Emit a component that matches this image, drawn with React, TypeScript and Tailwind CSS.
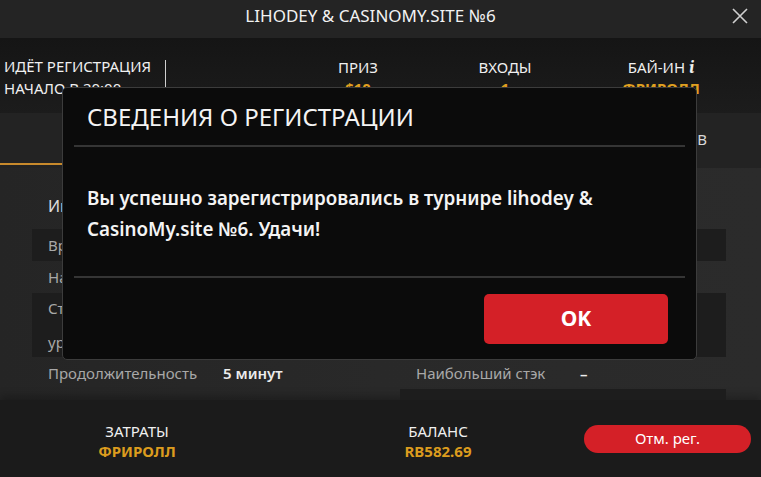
import React from 'react'

const font = { fontFamily: '"Noto Sans", "Open Sans", sans-serif' }

const leftRows = [
  { label: 'Время начала', value: '20:00', dark: true, tall: false },
  { label: 'Начальный стэк', value: '10 000', dark: false, tall: false },
  { label: 'Стартовый', value: '10/20', dark: true, tall: true, extra: 'уровень блайндов' },
  { label: 'Продолжительность', value: '5 минут', dark: false, tall: false },
]

const rightRows = [
  { label: 'Игроков', value: '1', dark: true, tall: false },
  { label: 'Столов', value: '1', dark: false, tall: false },
  { label: 'Средний стэк', value: '–', dark: true, tall: true },
  { label: 'Наибольший стэк', value: '–', dark: false, tall: false },
  { label: '', value: '', dark: true, tall: false },
]

function Row({ row, valueX }: { row: any; valueX: string }) {
  return (
    <div
      className={`flex shrink-0 flex-col justify-center px-4 ${row.tall ? 'h-[64px]' : 'h-[32px]'} ${
        row.dark ? 'bg-[#1d1d1d]' : ''
      }`}
    >
      <div className="flex items-center text-[15px]">
        <span className={`text-[#a8a8a8] ${valueX}`}>{row.label}</span>
        <span className="font-semibold text-[#ececec]">{row.value}</span>
      </div>
      {row.extra && <div className="mt-[12px] text-[15px] text-[#a8a8a8]">{row.extra}</div>}
    </div>
  )
}

export default function App() {
  return (
    <div className="relative h-[477px] w-[761px] overflow-hidden bg-[#262626] text-white" style={font}>
      {/* title bar */}
      <div className="relative flex h-[38px] items-center justify-center bg-[#242424] pb-[7px] pr-[20px]">
        <span className="text-[17px] text-[#f2f2f2]">LIHODEY &amp; CASINOMY.SITE №6</span>
        <svg className="absolute right-[13px] top-[8px]" width="16" height="16" viewBox="0 0 16 16">
          <path d="M1 1L15 15M15 1L1 15" stroke="#d0d0d0" strokeWidth="1.6" />
        </svg>
      </div>

      {/* info band */}
      <div className="flex h-[75px] bg-gradient-to-b from-[#151515] to-[#1c1c1c] text-[15px]">
        <div className="flex w-[166px] items-center pl-[4px] pt-[4px]">
          <div className="flex flex-col gap-[1px] leading-[21px] text-[#f0f0f0]">
            <span>ИДЁТ РЕГИСТРАЦИЯ</span>
            <span>НАЧАЛО В 20:00</span>
          </div>
          <div className="ml-auto h-[35px] w-px bg-[#cfcfcf]" />
        </div>
        <div className="flex flex-1 pt-[19px]">
          <div className="ml-[155px] flex w-[74px] flex-col items-center leading-[21px]">
            <span className="text-[#f0f0f0]">ПРИЗ</span>
            <span className="font-bold text-[#e0a020]">$10</span>
          </div>
          <div className="ml-[70px] flex w-[80px] flex-col items-center leading-[21px]">
            <span className="text-[#f0f0f0]">ВХОДЫ</span>
            <span className="font-bold text-[#e0a020]">1</span>
          </div>
          <div className="ml-[66px] flex w-[100px] flex-col items-center leading-[21px]">
            <span className="text-[#f0f0f0]">
              БАЙ-ИН <i className="font-serif text-[18px] font-bold">i</i>
            </span>
            <span className="font-bold text-[#e0a020]">ФРИРОЛЛ</span>
          </div>
        </div>
      </div>

      {/* tabs */}
      <div className="flex h-[55px] bg-[#232323] text-[15px] text-[#d8d8d8]">
        <div className="flex w-[240px] flex-col">
          <div className="flex flex-1 items-center justify-center">ИНФОРМАЦИЯ</div>
          <div className="h-[2px] bg-[#c88a2c]" />
          <div className="h-[3px]" />
        </div>
        <div className="flex w-[240px] items-center justify-center pb-[2px]">СТРУКТУРА</div>
        <div className="flex flex-1 items-center justify-end pb-[2px] pr-[54px]">ИГРОКОВ</div>
      </div>

      {/* content */}
      <div className="flex h-[232px] gap-[15px] overflow-hidden bg-gradient-to-r from-[#252525] via-[#292929] to-[#2b2b2b] pl-[32px] pr-[35px] pt-[26px]">
        <div className="flex w-[353px] flex-col">
          <div className="h-[35px] shrink-0 pl-4 text-[16px] text-[#dcdcdc]">Информация</div>
          {leftRows.map((r, i) => (
            <Row key={i} row={r} valueX="w-[175px]" />
          ))}
        </div>
        <div className="flex flex-1 flex-col">
          <div className="h-[35px] shrink-0 pl-4 text-[16px] text-[#dcdcdc]">Статистика</div>
          {rightRows.map((r, i) => (
            <Row key={i} row={r} valueX="w-[164px]" />
          ))}
        </div>
      </div>

      {/* footer */}
      <div className="flex h-[77px] items-center bg-[#1b1b1b] pl-[62px] pr-[10px] pt-[5px] shadow-[0_-4px_8px_rgba(0,0,0,0.25)]">
        <div className="flex w-[150px] flex-col items-center text-[15px] leading-[20px]">
          <span className="text-[#f0f0f0]">ЗАТРАТЫ</span>
          <span className="font-bold text-[#dc9c1e]">ФРИРОЛЛ</span>
        </div>
        <div className="ml-[151px] flex w-[150px] flex-col items-center text-[15px] leading-[20px]">
          <span className="text-[#f0f0f0]">БАЛАНС</span>
          <span className="font-bold text-[#dc9c1e]">RB582.69</span>
        </div>
        <button className="mb-[5px] ml-auto h-[28px] w-[167px] rounded-full bg-[#d42027] text-[15px] text-white">
          Отм. рег.
        </button>
      </div>

      {/* modal */}
      <div className="absolute left-[62px] top-[87px] flex h-[273px] w-[635px] flex-col rounded-[5px] border border-[#3c3c3c] bg-[#0b0b0b]">
        <div className="flex h-[57px] items-center pl-[24px] text-[24px] text-[#f4f4f4]">
          СВЕДЕНИЯ О РЕГИСТРАЦИИ
        </div>
        <div className="mx-[11px] h-[2px] bg-[#353535]" />
        <div className="flex h-[129px] flex-col justify-center pl-[24px] pt-[5px] text-[18.8px] font-semibold leading-[31px] text-[#f4f4f4]">
          <span>Вы успешно зарегистрировались в турнире lihodey &amp;</span>
          <span>CasinoMy.site №6. Удачи!</span>
        </div>
        <div className="mx-[11px] h-[2px] bg-[#353535]" />
        <div className="flex flex-1 items-start justify-end pr-[28px] pt-[16px]">
          <button className="h-[50px] w-[184px] rounded-[5px] bg-[#d42027] text-[21px] font-bold text-white">
            OK
          </button>
        </div>
      </div>
    </div>
  )
}
